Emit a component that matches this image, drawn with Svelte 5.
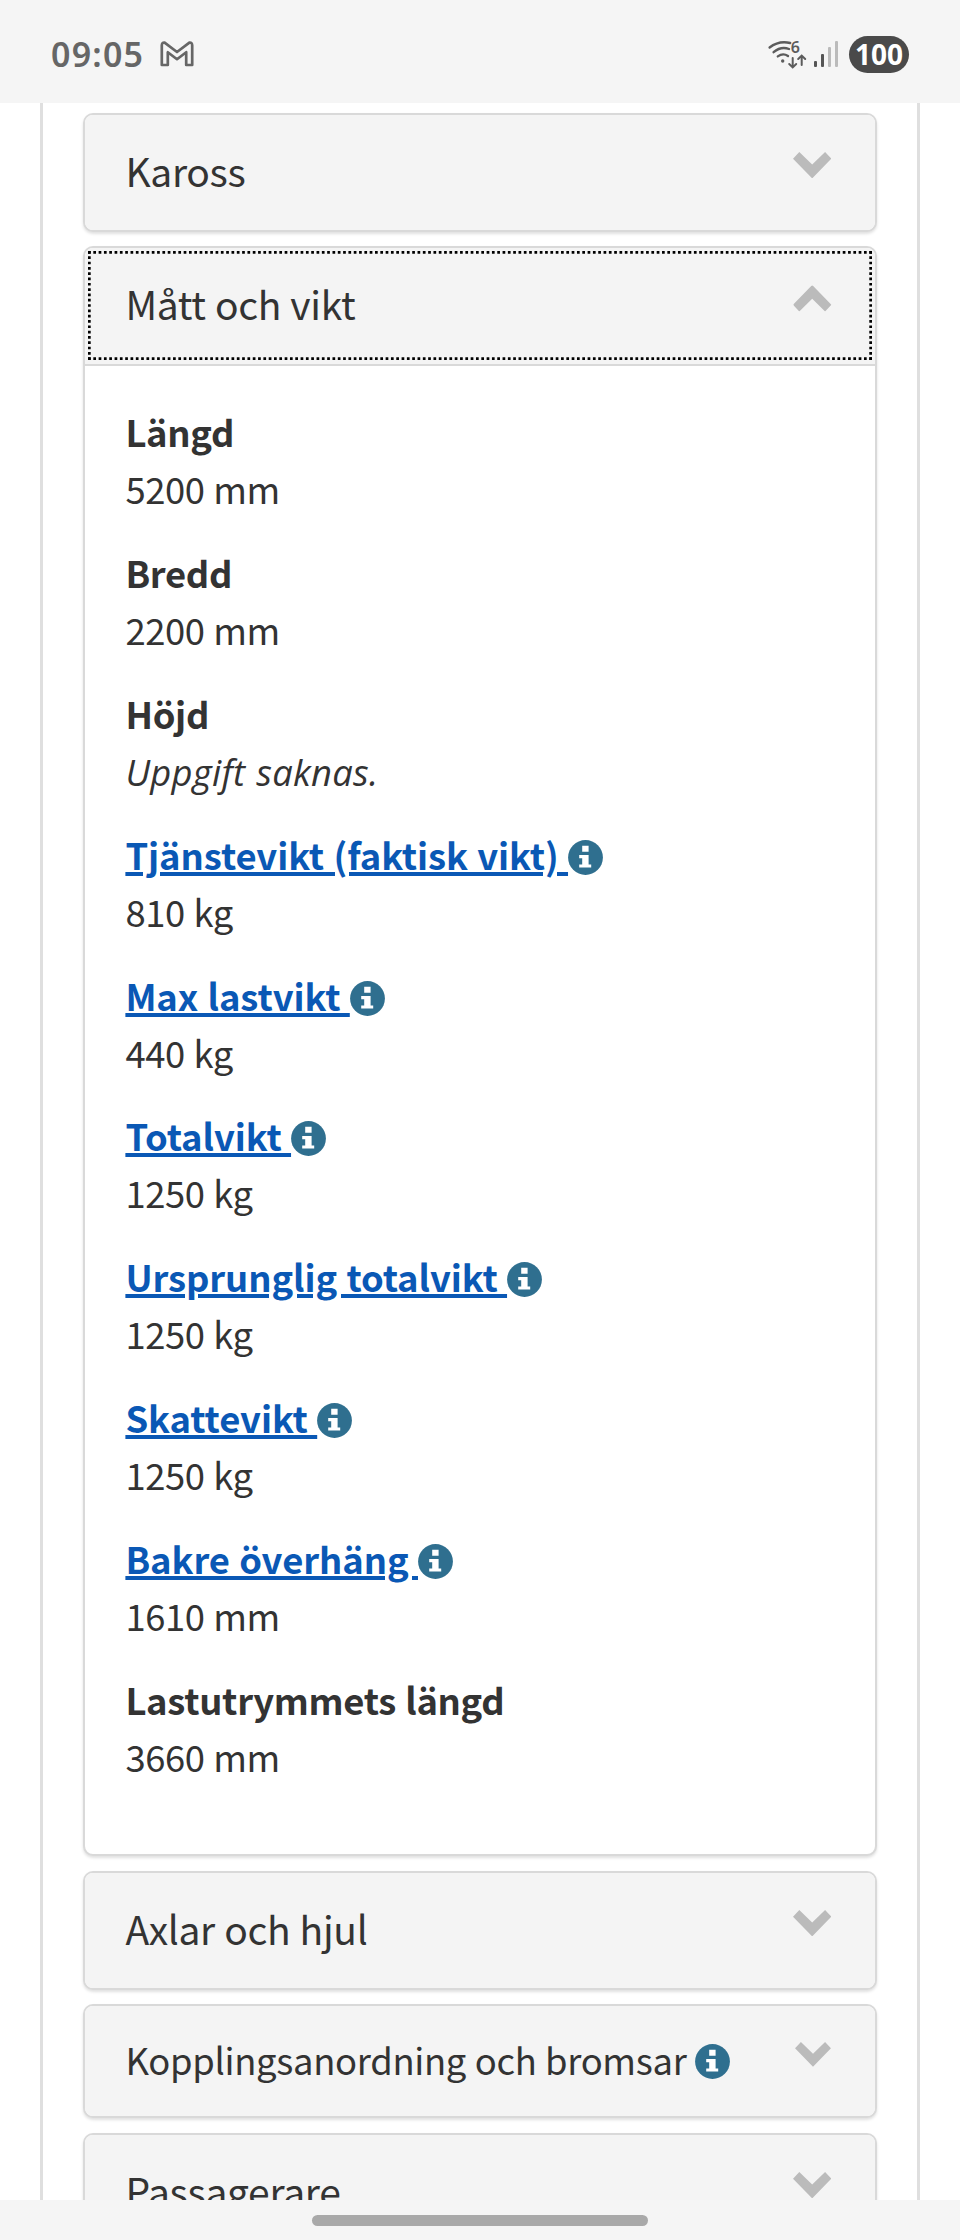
<script lang="ts">
	type Row = { label: string; value: string; info?: boolean; missing?: boolean }
	type Section = { title: string; open?: boolean; info?: boolean; rows?: Row[] }

	const sections: Section[] = [
		{ title: 'Kaross' },
		{
			title: 'Mått och vikt',
			open: true,
			rows: [
				{ label: 'Längd', value: '5200 mm' },
				{ label: 'Bredd', value: '2200 mm' },
				{ label: 'Höjd', value: 'Uppgift saknas.', missing: true },
				{ label: 'Tjänstevikt (faktisk vikt)', value: '810 kg', info: true },
				{ label: 'Max lastvikt', value: '440 kg', info: true },
				{ label: 'Totalvikt', value: '1250 kg', info: true },
				{ label: 'Ursprunglig totalvikt', value: '1250 kg', info: true },
				{ label: 'Skattevikt', value: '1250 kg', info: true },
				{ label: 'Bakre överhäng', value: '1610 mm', info: true },
				{ label: 'Lastutrymmets längd', value: '3660 mm' }
			]
		},
		{ title: 'Axlar och hjul' },
		{ title: 'Kopplingsanordning och bromsar', info: true },
		{ title: 'Passagerare' }
	]
</script>

{#snippet infoIcon()}
	<svg class="info" viewBox="0 0 35 35">
		<circle cx="17.5" cy="17.5" r="17.4" fill="#2f6f8f" />
		<path fill="#fff" d="M14.2 5.7h6.4v6.1h-6.4zM11.2 15h9.4v9.4h2.6v3H11.2v-3h3v-6.2h-3z" />
	</svg>
{/snippet}

<div class="screen">
	<header class="status">
		<span class="clock">09:05</span>
		<svg class="mail" viewBox="0 0 34 26">
			<path
				d="M1.8 24V4.5Q1.8 1.3 4.6 1.6L17 11 29.4 1.6Q32.2 1.3 32.2 4.5V24H26.2V11.2L17 18.2 7.8 11.2V24Z"
				fill="none"
				stroke="#666"
				stroke-width="2.7"
				stroke-linejoin="round"
			/>
		</svg>
		<div class="right">
			<svg class="wifi" viewBox="0 0 38 29">
				<g fill="none" stroke="#5c5c5c" stroke-width="2.4" stroke-linecap="round">
					<path d="M1.6 7.5Q11 .2 22.2 3" />
					<path d="M5.6 12.2Q13 6 21 9" />
					<path d="M9.8 16.4Q15 12.6 20 16" />
					<path stroke-width="2" d="M24.7 18v9M21.2 24l3.5 3.4 3.5-3.4M33.7 25v-9M30.2 19l3.5-3.4 3.5 3.4" />
				</g>
				<circle cx="14.7" cy="21" r="1.7" fill="#5c5c5c" />
				<text x="22.8" y="13" class="six">6</text>
			</svg>
			<svg class="signal" viewBox="0 0 24 26">
				<rect x="0" y="20" width="3" height="6" rx="1" fill="#555" />
				<rect x="7" y="13" width="3" height="13" rx="1" fill="#555" />
				<rect x="14" y="6" width="3" height="20" rx="1" fill="#bbb" />
				<rect x="21" y="0" width="3" height="26" rx="1" fill="#bbb" />
			</svg>
			<span class="battery">100</span>
		</div>
	</header>

	<main class="page">
		<div class="panel">
			{#each sections as section}
				<section class="card" class:small={section.info}>
					<div class="head" class:open={section.open}>
						<span class="title">{section.title}</span>
						{#if section.info}{@render infoIcon()}{/if}
						<svg class="chevron" viewBox="0 0 38.4 26.4">
							<path d="M0 6.7 6.3 0 19.2 12.6 32.1 0 38.4 6.7 19.2 26.4Z" fill="#bbb" />
						</svg>
						{#if section.open}
							<svg class="focus" viewBox="0 0 784 109">
								<g stroke="#000" stroke-width="2.7" stroke-dasharray="2.7 2.615">
									<path d="M0 1.35H784M0 107.65H784" />
									<path d="M1.35 0V109M782.65 0V109" />
								</g>
							</svg>
						{/if}
					</div>
					{#if section.rows}
						<dl class="rows">
							{#each section.rows as row}
								<div class="row">
									<dt>
										{#if row.info}
											<a href="#info">{row.label}&nbsp;</a>{@render infoIcon()}
										{:else}
											{row.label}
										{/if}
									</dt>
									<dd class:missing={row.missing}>{row.value}</dd>
								</div>
							{/each}
						</dl>
					{/if}
				</section>
			{/each}
		</div>
	</main>

	<footer class="nav"><div class="handle"></div></footer>
</div>

<style>
	:global(body) {
		margin: 0;
		background: #fff;
	}

	.screen {
		width: 960px;
		height: 2240px;
		display: flex;
		flex-direction: column;
		overflow: hidden;
		font-family: 'Noto Sans CJK SC', 'Noto Sans', sans-serif;
		color: #333;
	}

	.status {
		box-sizing: border-box;
		flex: none;
		height: 103px;
		padding: 5px 51px 0 51px;
		display: flex;
		align-items: center;
		background: #f5f5f5;
	}

	.clock {
		width: 96px;
		font: 600 34px/40px 'Noto Sans', sans-serif;
		letter-spacing: 1.2px;
		color: #666;
	}

	.mail {
		width: 34px;
		height: 26px;
		margin-left: 13px;
	}

	.right {
		display: flex;
		align-items: center;
		margin-left: auto;
	}

	.wifi {
		width: 38px;
		height: 29px;
		overflow: visible;
	}

	.six {
		font: 600 16px 'Noto Sans', sans-serif;
		fill: #5c5c5c;
	}

	.signal {
		width: 24px;
		height: 26px;
		margin-left: 8px;
	}

	.battery {
		width: 60px;
		height: 37px;
		margin-left: 11px;
		border-radius: 19px;
		background: #4a4a4a;
		color: #fff;
		font: 700 28px/37px 'Noto Sans', sans-serif;
		text-align: center;
	}

	.page {
		flex: 1;
		min-height: 0;
		padding: 0 40px;
		overflow: hidden;
	}

	.panel {
		box-sizing: border-box;
		border: solid #dfdfdf;
		border-width: 0 3px;
		padding: 10px 40px 0;
		display: flex;
		flex-direction: column;
		gap: 14.5px;
	}

	.card {
		box-sizing: border-box;
		border: 2px solid #d9d9d9;
		border-radius: 10px;
		background: #fff;
		box-shadow: 0 2px 3px rgba(0, 0, 0, 0.12);
	}

	.head {
		position: relative;
		box-sizing: border-box;
		height: 114.8px;
		padding: 25px 44px 0 40.4px;
		display: flex;
		align-items: flex-start;
		border-radius: 8px;
		background: #f4f4f4;
		font-size: 39px;
		line-height: 60px;
		letter-spacing: -0.32px;
		word-spacing: 0.8px;
	}

	.head.open {
		height: 117.5px;
		border-bottom: 2px solid #d9d9d9;
		border-radius: 8px 8px 0 0;
	}

	.small .head {
		height: 110.4px;
		padding-top: 23px;
		font-size: 36.4px;
	}

	.chevron {
		width: 38.4px;
		height: 26.4px;
		margin: 12px 0 0 auto;
	}

	.small .chevron {
		width: 36px;
		height: 24.7px;
		margin-top: 13px;
	}

	.open .chevron {
		transform: rotate(180deg);
	}

	.focus {
		position: absolute;
		left: 3px;
		top: 3px;
		width: 784px;
		height: 109px;
	}

	.info {
		width: 35px;
		height: 35px;
		flex: none;
	}

	.small .info {
		margin: 15px 0 0 9px;
	}

	.rows {
		box-sizing: border-box;
		height: 1488.5px;
		margin: 0;
		padding: 37px 40.4px 0;
		font-size: 36.4px;
		line-height: 57px;
		letter-spacing: -0.45px;
		word-spacing: 1.2px;
	}

	.row {
		height: 140.95px;
	}

	dt {
		display: flex;
		height: 57px;
		font-weight: 700;
		letter-spacing: -0.3px;
	}

	dt .info {
		margin-top: 14px;
	}

	dd {
		height: 57px;
		margin: 0;
	}

	.missing {
		font-family: 'Open Sans', sans-serif;
		font-style: italic;
		line-height: 60px;
		letter-spacing: 0.25px;
	}

	a {
		color: #0a58b5;
		letter-spacing: -0.08px;
		text-decoration: underline;
		text-decoration-thickness: 3.5px;
		text-underline-offset: 2px;
	}

	.nav {
		flex: none;
		height: 40px;
		display: flex;
		justify-content: center;
		align-items: flex-start;
		background: #f5f5f5;
	}

	.handle {
		width: 336px;
		height: 11px;
		margin-top: 15px;
		border-radius: 6px;
		background: #a9a9a9;
	}
</style>
